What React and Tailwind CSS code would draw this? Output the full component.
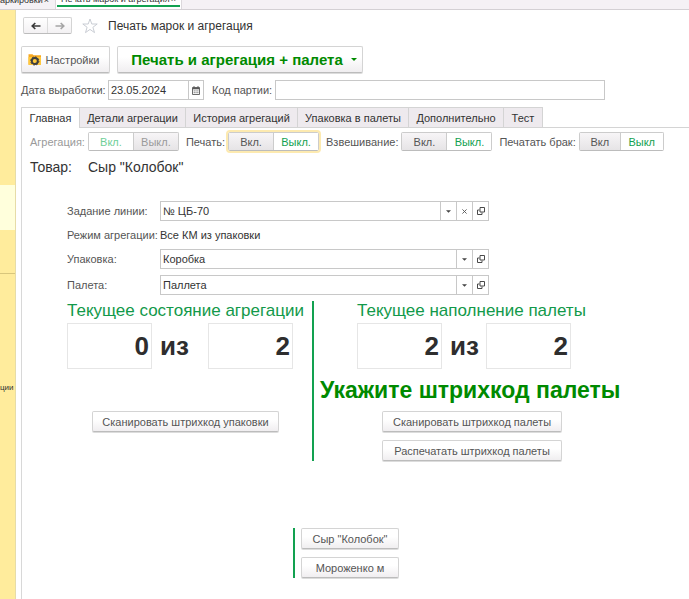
import { useState } from 'react'
import clsx from 'clsx'

const TABS = [
  { name: 'Главная', width: 'w-[58px]' },
  { name: 'Детали агрегации', width: 'w-[106px]' },
  { name: 'История агрегаций', width: 'w-[112px]' },
  { name: 'Упаковка в палеты', width: 'w-[111px]' },
  { name: 'Дополнительно', width: 'w-[95px]' },
  { name: 'Тест', width: 'w-[39px]' },
]

function ArrowIcon({ className }) {
  return (
    <svg viewBox="0 0 10 8" className={clsx('h-2 w-[10px]', className)} fill="none" stroke="currentColor" strokeWidth="1.6">
      <path d="M9.5 4H1.5M4.3 1L1.2 4l3.1 3" />
    </svg>
  )
}

function StarIcon() {
  return (
    <svg viewBox="0 0 16 16" className="h-4 w-4" fill="none" stroke="#c3c7cf" strokeWidth="0.9">
      <path d="M8 1l1.8 5h5.4l-4.3 3.3 1.6 5.3L8 11.4l-4.5 3.2 1.6-5.3L.8 6h5.4z" />
    </svg>
  )
}

function SettingsIcon() {
  return (
    <svg viewBox="0 0 14 13" className="h-[13px] w-[14px]">
      <path d="M.5 1.2h4l1 1H13v9.6H.5z" fill="#f6a821" />
      <path d="M.5 4H13v7.8H.5z" fill="#ffc93c" />
      <circle cx="6.8" cy="8" r="3" fill="#ffc93c" stroke="#3e3e3e" strokeWidth="1.9" />
      <circle cx="6.8" cy="8" r="4.1" fill="none" stroke="#3e3e3e" strokeWidth="1" strokeDasharray="1.6 1.6" />
    </svg>
  )
}

function CalendarIcon() {
  return (
    <svg viewBox="0 0 8 9" className="h-[9px] w-2" fill="none" stroke="#5a5a5a">
      <path d="M.5 1.5h7v7h-7z" strokeWidth="0.9" />
      <path d="M.5 2.5h7" strokeWidth="1.6" />
      <path d="M2 0v2M6 0v2" strokeWidth="0.9" />
      <path d="M1.7 4.9h4.8M1.7 6.7h4.8" strokeWidth="0.9" strokeDasharray="1.1 .7" />
    </svg>
  )
}

function OpenIcon() {
  return (
    <svg viewBox="0 0 8 8" className="h-2 w-2" fill="none" stroke="#4a4a4a" strokeWidth="1">
      <path d="M3 .5h4.5V5H3z" />
      <path d="M2.5 3h-2v4.5H5V5.5" />
    </svg>
  )
}

function CaretIcon({ className }) {
  return (
    <svg viewBox="0 0 6 3" className={className} fill="currentColor">
      <path d="M0 0h6L3 3z" />
    </svg>
  )
}

function CommandButton({ className, children }) {
  return (
    <button
      type="button"
      className={clsx(
        'flex items-center justify-center rounded-[2px] border border-[#d4d4d4] border-b-[#bcbcbc] bg-linear-to-b from-white from-40% to-[#f0eef0] whitespace-nowrap text-[#555] shadow-[0_1px_0_#dcdcdc]',
        className,
      )}
    >
      {children}
    </button>
  )
}

function Toggle({ label, options, value, disabled, focused, widths }) {
  const [current, setCurrent] = useState(value)
  return (
    <div role="group" aria-label={label} className={clsx('flex items-center gap-[3px]', disabled ? 'text-[#9a9a9a]' : 'text-[#555]')}>
      <span className="whitespace-nowrap">{label}</span>
      <div
        className={clsx(
          'flex h-[19px] rounded-[2px] border border-[#cccccc] border-b-[#bcbcbc]',
          focused && 'outline-2 outline-[#fdeab0]',
        )}
      >
        {options.map((option, i) => (
          <button
            key={option}
            type="button"
            disabled={disabled}
            aria-pressed={current === option}
            onClick={() => setCurrent(option)}
            className={clsx(
              'flex items-center justify-center whitespace-nowrap',
              widths[i],
              i > 0 && 'border-l border-[#cccccc]',
              current === option ? 'bg-white' : 'bg-linear-to-b from-[#f7f5f7] to-[#e6e4e6]',
              current === option && (disabled ? 'text-[#6fcf97]' : 'text-[#12a150]'),
            )}
          >
            {option}
          </button>
        ))}
      </div>
    </div>
  )
}

function LookupField({ id, label, value, clearable }) {
  return (
    <>
      <label htmlFor={id} className="text-[#555]">{label}</label>
      <div className="flex h-5 border border-[#c8c8c8] bg-white">
        <input id={id} defaultValue={value} className="min-w-0 flex-1 px-[2px] outline-none" />
        <button type="button" aria-label="Выбрать" className="flex w-4 items-center justify-center border-l border-[#c8c8c8]">
          <CaretIcon className="h-[3px] w-[5px] text-[#444]" />
        </button>
        {clearable && (
          <button type="button" aria-label="Очистить" className="flex w-4 items-center justify-center border-l border-[#c8c8c8]">
            <svg viewBox="0 0 5 5" className="h-[5px] w-[5px]" stroke="#555" strokeWidth="0.9">
              <path d="M.4.4l4.2 4.2M4.6.4L.4 4.6" />
            </svg>
          </button>
        )}
        <button type="button" aria-label="Открыть" className="flex w-4 items-center justify-center border-l border-[#c8c8c8]">
          <OpenIcon />
        </button>
      </div>
    </>
  )
}

function Counter({ title, current, total, gap }) {
  return (
    <div>
      <h2 className="h-5 text-[17px] leading-5 whitespace-nowrap text-[#12994a]">{title}</h2>
      <div className="mt-[2px] flex h-[46px] items-center text-[26px] font-bold text-[#2e2e2e]">
        <input readOnly aria-label={title} value={current} className="h-full w-[85px] border border-[#e6e6e6] pr-[2px] text-right outline-none" />
        <span className={clsx('pl-2', gap)}>из</span>
        <input readOnly aria-label="Всего" value={total} className="h-full w-[85px] border border-[#e6e6e6] pr-[2px] text-right outline-none" />
      </div>
    </div>
  )
}

function WindowTabs() {
  return (
    <nav className="flex h-[10px] items-end overflow-hidden border-b border-[#d4d0d4] bg-[#f5f1f5] text-[9px] leading-3 text-[#333]">
      <div className="flex h-[15px] w-[55px] shrink-0 justify-between pr-[6px] whitespace-nowrap">
        <span>аркировки</span>
        <span>×</span>
      </div>
      <div className="flex h-[16px] w-[127px] shrink-0 flex-col border-x border-[#dcd8dc] bg-white px-px">
        <div className="flex h-[14px] shrink-0 justify-between border-b-2 border-[#12a150] px-1 whitespace-nowrap">
          <span>Печать марок и агрегация</span>
          <span>×</span>
        </div>
      </div>
    </nav>
  )
}

function Sidebar() {
  return (
    <aside className="flex w-4 shrink-0 flex-col overflow-hidden border-r border-[#e6dca8] bg-[#ffec9c] text-[#333]">
      <div className="h-[175px]" />
      <div className="h-[45px] bg-[#ffffdc]" />
      <div className="h-11 border-b border-[#d8c67c]" />
      <div className="mt-[108px] text-[8px] leading-3">ции</div>
    </aside>
  )
}

export default function App() {
  const [tab, setTab] = useState('Главная')

  return (
    <div className="flex min-h-screen flex-col bg-white font-['Liberation_Sans',Arial,sans-serif] text-[11px] leading-[14px] text-[#333]">
      <WindowTabs />
      <div className="flex flex-1">
        <Sidebar />
        <main className="flex min-w-0 flex-1 flex-col pt-[7px] pl-[5px]">
          <header className="flex h-[17px] items-center pl-[2px]">
            <div className="flex h-[17px] w-[49px] rounded-[2px] border border-[#d4d4d4] border-b-[#bcbcbc] bg-linear-to-b from-white to-[#f3f1f3]">
              <button type="button" aria-label="Назад" className="flex flex-1 items-center justify-center text-[#3a3a3a]">
                <ArrowIcon />
              </button>
              <button type="button" aria-label="Вперёд" className="flex flex-1 items-center justify-center border-l border-[#dcdcdc] text-[#a5a5a5]">
                <ArrowIcon className="rotate-180" />
              </button>
            </div>
            <button type="button" aria-label="В избранное" className="ml-[10px]">
              <StarIcon />
            </button>
            <h1 className="ml-[10px] text-[12px]">Печать марок и агрегация</h1>
          </header>

          <div className="mt-3 flex gap-[7px]">
            <CommandButton className="h-[27px] w-[89px] gap-1 pr-1">
              <SettingsIcon />
              Настройки
            </CommandButton>
            <CommandButton className="h-[27px] w-[246px] gap-2 pl-2">
              <span className="text-[15px] font-bold text-[#008a00]">Печать и агрегация + палета</span>
              <CaretIcon className="h-[3px] w-[6px] text-[#008a00]" />
            </CommandButton>
          </div>

          <div className="mt-[7px] flex h-5 items-center text-[#555]">
            <label htmlFor="date" className="w-[87px] whitespace-nowrap">Дата выработки:</label>
            <div className="flex h-5 w-24 border border-[#c8c8c8] text-[#333]">
              <input id="date" defaultValue="23.05.2024" className="min-w-0 flex-1 px-[2px] outline-none" />
              <button type="button" aria-label="Календарь" className="flex w-[15px] items-center justify-center border-l border-[#c8c8c8]">
                <CalendarIcon />
              </button>
            </div>
            <label htmlFor="batch" className="ml-2 w-[63px] whitespace-nowrap">Код партии:</label>
            <input id="batch" className="h-5 w-[330px] border border-[#c8c8c8] px-[2px] outline-none" />
          </div>

          <div role="tablist" className="mt-[7px] flex h-[21px] border-l border-[#d8d8d8]">
            {TABS.map(({ name, width }) => (
              <button
                key={name}
                type="button"
                role="tab"
                aria-selected={tab === name}
                onClick={() => setTab(name)}
                className={clsx(
                  'border-t border-r border-[#d4d4d4] whitespace-nowrap',
                  width,
                  tab === name ? 'bg-white' : 'border-b bg-[#eeeaee]',
                )}
              >
                {name}
              </button>
            ))}
            <div className="flex-1 border-b border-[#d4d4d4]" />
          </div>

          <section className="flex-1 border-l border-[#d8d8d8]">
            <div className="flex gap-[7px] pt-1 pl-2">
              <Toggle label="Агрегация:" options={['Вкл.', 'Выкл.']} value="Вкл." disabled widths={['w-11', 'w-[45px]']} />
              <Toggle label="Печать:" options={['Вкл.', 'Выкл.']} value="Выкл." focused widths={['w-11', 'w-[45px]']} />
              <Toggle label="Взвешивание:" options={['Вкл.', 'Выкл.']} value="Выкл." widths={['w-11', 'w-[45px]']} />
              <Toggle label="Печатать брак:" options={['Вкл', 'Выкл']} value="Выкл" widths={['w-10', 'w-[43px]']} />
            </div>

            <div className="mt-[6px] flex pl-2 text-[14px] leading-5">
              <span className="w-[58px]">Товар:</span>
              <span>Сыр "Колобок"</span>
            </div>

            <div className="mt-6 grid grid-cols-[93px_329px] items-center gap-y-[6px] pl-[45px]">
              <LookupField id="task" label="Задание линии:" value="№ ЦБ-70" clearable />
              <span className="h-4 leading-4 whitespace-nowrap text-[#555]">Режим агрегации:</span>
              <span className="h-4 leading-4">Все КМ из упаковки</span>
              <LookupField id="pack" label="Упаковка:" value="Коробка" />
              <LookupField id="pallet" label="Палета:" value="Паллета" />
            </div>

            <div className="mt-[6px] flex pl-[45px]">
              <div className="w-[245px]">
                <Counter title="Текущее состояние агрегации" current="0" total="2" gap="w-14" />
                <CommandButton className="mt-[42px] ml-[25px] h-[21px] w-[187px]">Сканировать штрихкод упаковки</CommandButton>
              </div>
              <div className="border-l-2 border-[#12a150] pl-[6px]">
                <div className="pl-[37px]">
                  <Counter title="Текущее наполнение палеты" current="2" total="2" gap="w-11" />
                </div>
                <p className="h-[42px] text-[23px] leading-[42px] font-bold whitespace-nowrap text-[#008a00]">Укажите штрихкод палеты</p>
                <div className="flex flex-col gap-2 pl-[62px]">
                  <CommandButton className="h-[21px] w-[180px]">Сканировать штрихкод палеты</CommandButton>
                  <CommandButton className="h-[21px] w-[180px]">Распечатать штрихкод палеты</CommandButton>
                </div>
              </div>
            </div>

            <div className="mt-[67px] ml-[271px] flex flex-col gap-2 border-l-2 border-[#12a150] pl-[6px]">
              <CommandButton className="h-[21px] w-[98px]">Сыр "Колобок"</CommandButton>
              <CommandButton className="h-[21px] w-[98px]">Мороженко м</CommandButton>
            </div>
          </section>
        </main>
      </div>
    </div>
  )
}
